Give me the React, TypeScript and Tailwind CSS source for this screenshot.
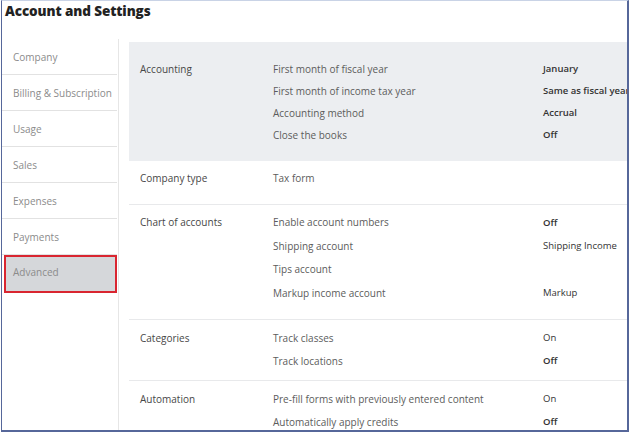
import React from 'react'

type Row = { name: string; value?: string; strong?: boolean }
type Section = { label: string; rows: Row[]; rowH: string; pad: string; gray?: boolean }

const menu = ['Company', 'Billing & Subscription', 'Usage', 'Sales', 'Expenses', 'Payments']

const sections: Section[] = [
  {
    label: 'Accounting',
    gray: true,
    rowH: 'h-[22px]',
    pad: 'pt-[16px] pb-[15px]',
    rows: [
      { name: 'First month of fiscal year', value: 'January', strong: true },
      { name: 'First month of income tax year', value: 'Same as fiscal year', strong: true },
      { name: 'Accounting method', value: 'Accrual', strong: true },
      { name: 'Close the books', value: 'Off', strong: true },
    ],
  },
  {
    label: 'Company type',
    rowH: 'h-[22px]',
    pad: 'pt-[6px] pb-[15px]',
    rows: [{ name: 'Tax form' }],
  },
  {
    label: 'Chart of accounts',
    rowH: 'h-[23.5px]',
    pad: 'pt-[6px] pb-[14px]',
    rows: [
      { name: 'Enable account numbers', value: 'Off', strong: true },
      { name: 'Shipping account', value: 'Shipping Income' },
      { name: 'Tips account' },
      { name: 'Markup income account', value: 'Markup' },
    ],
  },
  {
    label: 'Categories',
    rowH: 'h-[23px]',
    pad: 'pt-[7px] pb-[7px]',
    rows: [
      { name: 'Track classes', value: 'On' },
      { name: 'Track locations', value: 'Off', strong: true },
    ],
  },
  {
    label: 'Automation',
    rowH: 'h-[23px]',
    pad: 'pt-[7px] pb-[6px]',
    rows: [
      { name: 'Pre-fill forms with previously entered content', value: 'On' },
      { name: 'Automatically apply credits', value: 'Off', strong: true },
    ],
  },
]

export default function App() {
  return (
    <div className="w-[630px] h-[433px] bg-white overflow-hidden" style={{ fontFamily: '"Open Sans", "Liberation Sans", sans-serif' }}>
      <div className="ml-[1px] w-[628px] h-[432px] border-l border-t border-r-2 border-b-2 border-[#56679a] border-t-[#c9d3e6] overflow-hidden flex flex-col">
        {/* header */}
        <div className="h-[38px] pl-[3px] text-[13.5px] font-extrabold leading-[20px] text-[#222] tracking-[-0.1px]">
          Account and Settings
        </div>

        <div className="flex flex-1 min-h-0">
          {/* left menu */}
          <div className="w-[117px] shrink-0 border-r border-[#e6e6e6]">
            {menu.map((m) => (
              <div key={m} className="h-[36px] mr-[1px] border-b border-[#e2e2e2] pl-[11px] pt-[2px] flex items-center text-[10px] text-[#8b8b8b]">
                {m}
              </div>
            ))}
            <div className="ml-[2px] mr-[1px] h-[38px] border-2 border-[#d92530] bg-[#d5d7da] pl-[7px] pb-[3px] flex items-center text-[10px] text-[#8b8b8b]">
              Advanced
            </div>
          </div>

          {/* settings */}
          <div className="flex-1 pl-[10px] pt-[3px]">
            {sections.map((s) => (
              <div
                key={s.label}
                className={`flex ${s.pad} ${s.gray ? 'bg-[#eceef1]' : 'border-b border-[#e8e9eb]'}`}
              >
                <div className="w-[144px] pl-[11px] shrink-0">
                  <div className={`${s.rowH} flex items-center text-[10px] text-[#474747]`}>{s.label}</div>
                </div>
                <div className="flex-1">
                  {s.rows.map((r) => (
                    <div key={r.name} className={`${s.rowH} flex items-center text-[10px]`}>
                      <div className="w-[270px] text-[#5c5c5c] whitespace-nowrap">{r.name}</div>
                      <div className={`whitespace-nowrap text-[#333] ${r.strong ? 'font-semibold' : ''} text-[9.5px]`}>{r.value}</div>
                    </div>
                  ))}
                </div>
              </div>
            ))}
          </div>
        </div>
      </div>
    </div>
  )
}
